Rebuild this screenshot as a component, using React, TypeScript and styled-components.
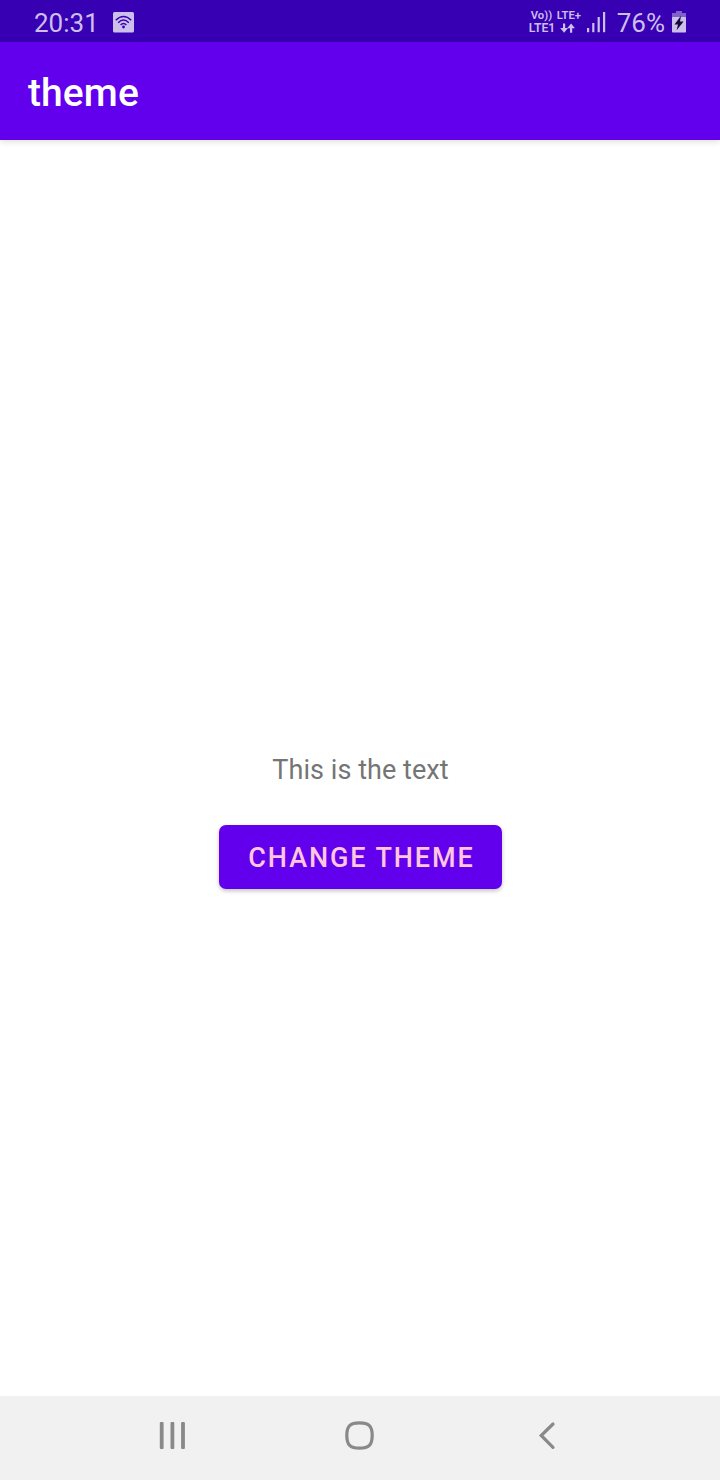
import React from "react";
import styled, { createGlobalStyle } from "styled-components";

const GlobalStyle = createGlobalStyle`
  body { margin: 0; background: #fff; font-family: Roboto, "Noto Sans", sans-serif; }
`;

const Screen = styled.div`
  width: 720px;
  height: 1480px;
  display: flex;
  flex-direction: column;
  background: #fff;
`;

const StatusBar = styled.header`
  height: 42px;
  flex: none;
  box-sizing: border-box;
  display: flex;
  align-items: flex-start;
  justify-content: space-between;
  padding: 0 34px;
  background: #3700b3;
  color: #cdbfec;
`;

const StatusGroup = styled.div`
  display: flex;
  height: 42px;
`;

const StatusText = styled.span<{ $gap?: number }>`
  font-size: 26px;
  line-height: 30px;
  padding-top: 8px;
  margin-left: ${(p) => p.$gap ?? 0}px;
  white-space: nowrap;
`;

const StatusIcon = styled.svg<{ $gap: number }>`
  flex: none;
  display: block;
  margin-left: ${(p) => p.$gap}px;
`;

const Network = styled.div`
  width: 54px;
  padding-top: 10px;
  font-weight: 600;
  line-height: 12px;
`;

const NetworkLine = styled.div<{ $indent?: number }>`
  display: flex;
  height: 12px;
  padding-left: ${(p) => p.$indent ?? 0}px;
  white-space: nowrap;
`;

const NetworkLabel = styled.span<{ $width: number; $size: number }>`
  width: ${(p) => p.$width}px;
  font-size: ${(p) => p.$size}px;
`;

const AppBar = styled.div`
  height: 98px;
  flex: none;
  box-sizing: border-box;
  display: flex;
  align-items: center;
  padding: 3px 28px 0;
  background: #6200ee;
  box-shadow: 0 2px 6px rgba(0, 0, 0, 0.12);
`;

const Title = styled.h1`
  margin: 0;
  font-size: 39px;
  line-height: 46px;
  font-weight: 500;
  letter-spacing: 0.1px;
  color: #fff;
`;

const Content = styled.main`
  flex: 1;
  display: flex;
  flex-direction: column;
  align-items: center;
  padding-top: 612px;
`;

const Message = styled.p`
  margin: 0;
  padding-left: 1px;
  font-size: 27px;
  line-height: 36px;
  letter-spacing: 0.06px;
  color: #757575;
`;

const ThemeButton = styled.button`
  width: 283px;
  height: 64px;
  margin: 37px 0 0 1px;
  padding: 2px 0 0 2px;
  border: 0;
  border-radius: 7px;
  background: #6200ee;
  color: #ffc6dc;
  font-family: inherit;
  font-size: 27px;
  font-weight: 500;
  letter-spacing: 1.9px;
  white-space: nowrap;
  box-shadow: 0 2px 4px rgba(0, 0, 0, 0.24);
`;

const NavBar = styled.nav`
  height: 84px;
  flex: none;
  display: flex;
  justify-content: center;
  background: #f1f1f1;
`;

const NavItem = styled.div`
  width: 187px;
  display: flex;
  justify-content: center;
`;

export default function App() {
  return (
    <>
      <GlobalStyle />
      <Screen>
        <StatusBar>
          <StatusGroup>
            <StatusText>20:31</StatusText>
            <StatusIcon $gap={13} width="22" height="42" viewBox="0 0 22 42">
              <rect x="1" y="12" width="21" height="20.5" rx="1.5" fill="#cdbfec" />
              <g fill="none" stroke="#3700b3" strokeWidth="1.5">
                <path d="M3.8 20.2Q11.5 12.8 19.2 20.2" />
                <path d="M6.2 22.7Q11.5 17.4 16.8 22.7" />
                <path d="M8.6 25Q11.5 22 14.4 25" />
              </g>
              <circle cx="11.5" cy="27" r="1.4" fill="#3700b3" />
            </StatusIcon>
          </StatusGroup>
          <StatusGroup>
            <Network>
              <NetworkLine $indent={2}>
                <NetworkLabel $width={26} $size={11.3}>Vo))</NetworkLabel>
                <NetworkLabel $width={26} $size={11.3}>LTE+</NetworkLabel>
              </NetworkLine>
              <NetworkLine>
                <NetworkLabel $width={30} $size={12.2}>LTE1</NetworkLabel>
                <svg width="18" height="12" viewBox="0 0 18 12" fill="#cdbfec">
                  <path d="M4 1.5H6.2V6H9L5.1 10.8L1.2 6H4ZM11 10.8V6.3H8.2L12.1 1.5L16 6.3H13.2V10.8Z" />
                </svg>
              </NetworkLine>
            </Network>
            <StatusIcon $gap={4} width="20" height="42" viewBox="0 0 20 42" fill="#cdbfec">
              <rect x="0" y="28" width="2.2" height="4.2" />
              <rect x="5.2" y="23" width="2.2" height="9.2" />
              <rect x="10.6" y="17" width="2.2" height="15.2" />
              <rect x="16" y="12" width="2.2" height="20.2" />
            </StatusIcon>
            <StatusText $gap={10}>76%</StatusText>
            <StatusIcon $gap={7} width="14" height="42" viewBox="0 0 14 42">
              <path d="M4 11h6v2h4v5H0v-5h4z" fill="#8061cc" />
              <rect x="0" y="17" width="14" height="15.5" rx="0.8" fill="#cdbfec" />
              <path d="M9 15.8L2.5 24.5H6L4.6 30.2L11.6 21.4H8Z" fill="#16083d" />
            </StatusIcon>
          </StatusGroup>
        </StatusBar>
        <AppBar>
          <Title>theme</Title>
        </AppBar>
        <Content>
          <Message>This is the text</Message>
          <ThemeButton type="button">CHANGE THEME</ThemeButton>
        </Content>
        <NavBar>
          <NavItem>
            <svg width="28" height="84" viewBox="0 0 28 84" fill="#898989">
              <rect x="0.8" y="26" width="3.8" height="27" rx="1" />
              <rect x="11.5" y="26" width="3.8" height="27" rx="1" />
              <rect x="22.1" y="26" width="3.8" height="27" rx="1" />
            </svg>
          </NavItem>
          <NavItem>
            <svg width="30" height="84" viewBox="0 0 30 84" fill="none" stroke="#898989" strokeWidth="3.2">
              <path d="M14.5 26.8C23.9 26.8 27.2 30.1 27.2 39.5S23.9 52.2 14.5 52.2S1.8 48.9 1.8 39.5S5.1 26.8 14.5 26.8Z" />
            </svg>
          </NavItem>
          <NavItem>
            <svg width="18" height="84" viewBox="0 0 18 84" fill="none" stroke="#898989" strokeWidth="3.2" strokeLinecap="round">
              <path d="M15 28L3.2 39.5L15 51.3" />
            </svg>
          </NavItem>
        </NavBar>
      </Screen>
    </>
  );
}
